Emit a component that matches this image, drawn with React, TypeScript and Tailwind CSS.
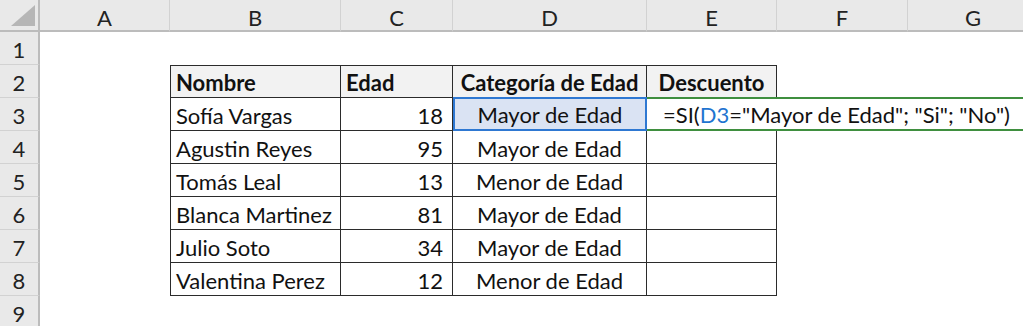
const COLS = ["A", "B", "C", "D", "E", "F", "G"];

const people = [
  { name: "Sofía Vargas", age: 18, cat: "Mayor de Edad" },
  { name: "Agustin Reyes", age: 95, cat: "Mayor de Edad" },
  { name: "Tomás Leal", age: 13, cat: "Menor de Edad" },
  { name: "Blanca Martinez", age: 81, cat: "Mayor de Edad" },
  { name: "Julio Soto", age: 34, cat: "Mayor de Edad" },
  { name: "Valentina Perez", age: 12, cat: "Menor de Edad" },
];

const font = "font-['Lato','Open_Sans',sans-serif]";
const line = "border-[#2b2b2b]";

function ColHeader({ label }: { label: string }) {
  return (
    <div className="flex items-center justify-center pt-[5px] bg-[#e9e9e9] border-r border-[#d2d2d2] border-b-2 border-b-[#bcbcbc] text-[22px] text-[#222]">
      {label}
    </div>
  );
}

function RowHeader({ n }: { n: number }) {
  return (
    <div className="flex items-center justify-center pt-[3px] bg-[#e9e9e9] border-r-2 border-r-[#bcbcbc] border-b border-b-[#d2d2d2] text-[22px] text-[#222]">
      {n}
    </div>
  );
}

function Corner() {
  return (
    <div className="flex items-end justify-end bg-[#e9e9e9] border-r-2 border-r-[#bcbcbc] border-b-2 border-b-[#bcbcbc] pr-[3px] pb-[4px]">
      <svg width="24" height="21" viewBox="0 0 24 21">
        <polygon points="24,0 24,21 0,21" fill="#b6b6b6" />
      </svg>
    </div>
  );
}

export default function App() {
  return (
    <div className={`w-[1023px] h-[326px] overflow-hidden bg-white ${font}`}>
      <div className="grid grid-cols-[40px_130px_171px_112px_194px_130px_131px_131px] grid-rows-[32px_repeat(9,33px)] text-[22px] leading-none text-[#111]">
        {/* column letters */}
        <Corner />
        {COLS.map((c) => (
          <ColHeader key={c} label={c} />
        ))}

        {/* row 1 */}
        <RowHeader n={1} />
        <div className="col-span-7" />

        {/* row 2: table headings */}
        <RowHeader n={2} />
        <div />
        <div className={`flex items-center pt-[3px] pl-[5px] font-bold bg-[#f2f2f2] border ${line}`}>Nombre</div>
        <div className={`flex items-center pt-[3px] pl-[5px] font-bold bg-[#f2f2f2] border-y border-r ${line}`}>Edad</div>
        <div className={`flex items-center justify-center pt-[3px] font-bold bg-[#f2f2f2] border-y border-r ${line}`}>Categoría de Edad</div>
        <div className={`flex items-center justify-center pt-[3px] font-bold bg-[#f2f2f2] border-y border-r ${line}`}>Descuento</div>
        <div className="col-span-2" />

        {people.map((p, i) => (
          <Row key={p.name} n={i + 3} name={p.name} age={p.age} cat={p.cat} first={i === 0} />
        ))}

        {/* row 9 */}
        <RowHeader n={9} />
        <div className="col-span-7" />
      </div>
    </div>
  );
}

function Row({ n, name, age, cat, first }: { n: number; name: string; age: number; cat: string; first: boolean }) {
  return (
    <>
      <RowHeader n={n} />
      <div />
      <div className={`flex items-center pt-[3px] pl-[5px] border-x border-b ${line}`}>{name}</div>
      <div className={`flex items-center justify-end pt-[3px] pr-[9px] border-r border-b ${line}`}>{age}</div>
      {first ? (
        <div className="flex items-center justify-center pt-[2px] bg-[#dae3f3] border-2 border-[#2e78d2] -mt-px">{cat}</div>
      ) : (
        <div className={`flex items-center justify-center pt-[3px] border-r border-b ${line}`}>{cat}</div>
      )}
      {first ? (
        // cell being edited: the formula runs across E3:G3
        <div className="col-span-3 flex items-center pt-[2px] pl-[16px] whitespace-nowrap border-y-2 border-[#3f8f3f] -mt-px">
          =SI(<span className="text-[#1f74d0]">D3</span>="Mayor de Edad"; "Si"; "No")
        </div>
      ) : (
        <>
          <div className={`border-r border-b ${line}`} />
          <div className="col-span-2" />
        </>
      )}
    </>
  );
}
